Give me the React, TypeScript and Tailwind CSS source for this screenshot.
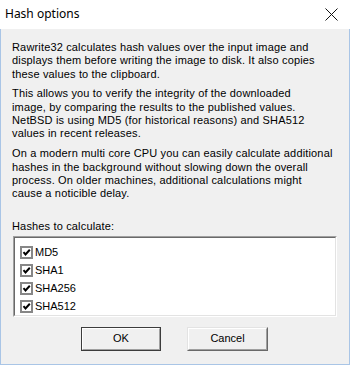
import React from "react";

const hashes = ["MD5", "SHA1", "SHA256", "SHA512"];

const Check: React.FC = () => (
  <div className="w-[13px] h-[13px] border-2 border-[#878787] bg-white flex items-center justify-center">
    <svg width="9" height="9" viewBox="0 0 9 9">
      <polyline points="1.5,4.2 3.5,6.4 7.8,1.8" fill="none" stroke="#000" strokeWidth="2" />
    </svg>
  </div>
);

const Button: React.FC<{ label: string; primary?: boolean }> = ({ label, primary }) => (
  <div
    className={
      primary
        ? "w-[80px] h-[24px] border border-[#3c3c3c]"
        : "w-[81px] h-[24px] border border-t-[#e3e3e3] border-l-[#e3e3e3] border-b-[#696969] border-r-[#696969]"
    }
  >
    <div className="w-full h-full border border-t-white border-l-white border-b-[#a0a0a0] border-r-[#a0a0a0] bg-[#f0f0f0] flex items-center justify-center">
      {label}
    </div>
  </div>
);

export default function App() {
  return (
    <div className="w-[350px] h-[365px] flex flex-col font-['Liberation_Sans',Arial,sans-serif] text-[11px] text-black">
      {/* Title bar */}
      <div className="h-[29px] bg-white flex items-center pl-[5px] pr-[12px] shrink-0">
        <span className="font-['Noto_Sans',sans-serif] text-[12px] leading-none pb-[1px]">Hash options</span>
        <svg className="ml-auto" width="13" height="13" viewBox="0 0 13 13">
          <path d="M0.5 0.5 L12.5 12.5 M12.5 0.5 L0.5 12.5" stroke="#111" strokeWidth="1" />
        </svg>
      </div>

      {/* Body */}
      <div className="flex-1 bg-[#f0f0f0] border-l border-r border-b border-[#a9c5e6] pl-[11px] pr-[12px] pt-[12px] flex flex-col leading-[13.3px] whitespace-nowrap">
        <div className="tracking-[0.16px]">
          <p>
            Rawrite32 calculates hash values over the input image and
            <br />
            displays them before writing the image to disk. It also copies
            <br />
            these values to the clipboard.
          </p>
          <p className="mt-[6.5px]">
            This allows you to verify the integrity of the downloaded
            <br />
            image, by comparing the results to the published values.
            <br />
            NetBSD is using MD5 (for historical reasons) and SHA512
            <br />
            values in recent releases.
          </p>
          <p className="mt-[6.8px]">
            On a modern multi core CPU you can easily calculate additional
            <br />
            hashes in the background without slowing down the overall
            <br />
            process. On older machines, additional calculations might
            <br />
            cause a noticible delay.
          </p>
          <p className="mt-[19px]">Hashes to calculate:</p>
        </div>

        {/* List box */}
        <div className="mt-[3px] ml-[1px] h-[81px] border border-t-[#a0a0a0] border-l-[#a0a0a0] border-b-white border-r-white">
          <div className="h-full border border-t-[#696969] border-l-[#696969] border-b-[#e3e3e3] border-r-[#e3e3e3] bg-white pt-[6px] pl-[5px]">
            {hashes.map((h) => (
              <div key={h} className="h-[18px] flex items-center gap-[2px]">
                <Check />
                <span className="leading-none">{h}</span>
              </div>
            ))}
          </div>
        </div>

        {/* Buttons */}
        <div className="mt-[10px] flex justify-center gap-[26px]">
          <Button label="OK" primary />
          <Button label="Cancel" />
        </div>
      </div>
    </div>
  );
}
